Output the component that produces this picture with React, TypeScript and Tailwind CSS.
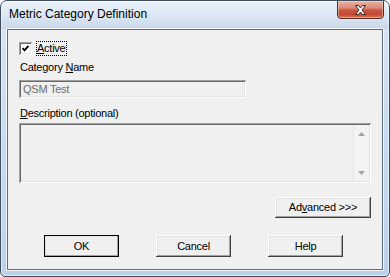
const raised =
  'shadow-[inset_-1px_-1px_#404040,inset_1px_1px_#ffffff,inset_-2px_-2px_#a0a0a0,inset_2px_2px_#e3e3e3]'
const sunken =
  'shadow-[inset_1px_1px_#a0a0a0,inset_-1px_-1px_#ffffff,inset_2px_2px_#696969,inset_-2px_-2px_#e3e3e3]'

function Button({ children, isDefault }: { children: React.ReactNode; isDefault?: boolean }) {
  return (
    <button
      type="button"
      className={`flex h-[22px] w-[75px] items-center justify-center bg-[#f0f0f0] ${raised} ${
        isDefault ? 'outline outline-1 -outline-offset-1 outline-black' : ''
      }`}
    >
      {children}
    </button>
  )
}

function ScrollArrow({ up }: { up?: boolean }) {
  return (
    <div className="flex h-[17px] items-center justify-center">
      <svg width="7" height="4" viewBox="0 0 7 4">
        <polygon points={up ? '3.5,0 7,4 0,4' : '0,0 7,0 3.5,4'} fill="#a3a3a3" />
      </svg>
    </div>
  )
}

export default function App() {
  return (
    <div className="relative flex h-[277px] w-[390px] flex-col overflow-hidden rounded-t-[7px] rounded-b-[5px] border border-[#3e4c5c] bg-gradient-to-b from-[#d9e6f4] via-[#c8daee] to-[#bcd1e9] font-['Liberation_Sans',Arial,sans-serif] text-[11px] tracking-[-0.25px] text-black shadow-[inset_0_0_0_1px_rgba(255,255,255,0.55)]">
      {/* title bar */}
      <div className="flex h-[28px] bg-[linear-gradient(180deg,rgba(255,255,255,0.45)_0%,rgba(255,255,255,0.15)_45%,rgba(160,180,205,0.25)_100%)]">
        <div className="pl-[8px] pt-[6px] text-[12px] leading-[14px] tracking-normal">
          Metric Category Definition
        </div>
        <div className="ml-auto mr-[5px] -mt-[1px] flex h-[19px] w-[47px] items-center justify-center rounded-b-[4px] border border-[#5b2a24] bg-[linear-gradient(180deg,#eab2a4_0%,#d98b78_40%,#c8553f_55%,#c24a33_80%,#d27a5c_100%)] shadow-[inset_0_0_0_1px_rgba(255,255,255,0.35)]">
          <svg width="13" height="10" viewBox="0 0 13 10">
            <path
              d="M1.5 0.5 H4.5 L6.5 3 L8.5 0.5 H11.5 L8 5 L11.5 9.5 H8.5 L6.5 7 L4.5 9.5 H1.5 L5 5 Z"
              fill="#ffffff"
              stroke="#3a2a2a"
              strokeWidth="1"
              strokeLinejoin="round"
            />
          </svg>
        </div>
      </div>

      {/* client area */}
      <div className="mx-[6px] flex h-[241px] flex-col border border-[#5f6e80] bg-[#f0f0f0] shadow-[0_0_0_1px_rgba(255,255,255,0.75)]">
        <div className="ml-[11px] mt-[11px] flex h-[15px] items-center">
          <div className={`flex h-[13px] w-[13px] items-center justify-center bg-white ${sunken}`}>
            <svg width="7" height="7" viewBox="0 0 7 7">
              <polyline points="0.5,3 2.5,5.3 6.5,1" fill="none" stroke="#000" strokeWidth="1.9" />
            </svg>
          </div>
          <span className="ml-[4px] border border-dotted border-black pr-[1px] leading-[13px]">
            <u>A</u>ctive
          </span>
        </div>

        <div className="ml-[12px] mt-[5px] leading-[13px]">
          Category <u>N</u>ame
        </div>

        <div
          className={`ml-[11px] mt-[6px] flex h-[18px] w-[227px] items-center bg-[#f0f0f0] pl-[4px] text-[#6d6d6d] ${sunken}`}
        >
          QSM Test
        </div>

        <div className="ml-[12px] mt-[9px] leading-[13px]">
          <u>D</u>escription (optional)
        </div>

        <div className={`ml-[11px] mt-[3px] flex h-[60px] w-[352px] bg-[#f0f0f0] p-[2px] ${sunken}`}>
          <div className="flex-1" />
          <div className="flex w-[16px] flex-col justify-between border-l border-[#e6e6e6] bg-[#f3f3f3]">
            <ScrollArrow up />
            <ScrollArrow />
          </div>
        </div>

        <div className="mr-[11px] mt-[14px] flex justify-end">
          <button
            type="button"
            className={`flex h-[21px] w-[96px] items-center justify-center bg-[#f0f0f0] ${raised}`}
          >
            Ad<u>v</u>anced &gt;&gt;&gt;
          </button>
        </div>

        <div className="ml-[36px] mt-[17px] flex gap-[37px]">
          <Button isDefault>OK</Button>
          <Button>Cancel</Button>
          <Button>Help</Button>
        </div>
      </div>
    </div>
  )
}
